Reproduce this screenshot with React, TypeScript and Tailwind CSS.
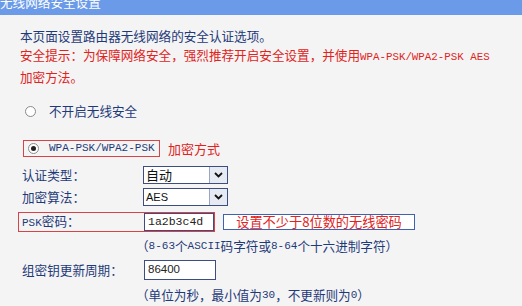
const cjk = "font-['Noto_Sans_CJK_SC',sans-serif]";
const mono = "font-['Liberation_Mono',monospace]";

function Radio({ checked }: { checked?: boolean }) {
  return (
    <span className="flex h-[11px] w-[11px] items-center justify-center rounded-full border border-[#8a8a8a] bg-white">
      {checked && <span className="h-[5px] w-[5px] rounded-full bg-[#222]" />}
    </span>
  );
}

function Select({ value, latin }: { value: string; latin?: boolean }) {
  return (
    <div className="flex h-[18px] w-[85px] items-stretch border border-[#3d4d80] bg-white">
      <span
        className={
          latin
            ? "flex-1 pl-[2px] text-[11px] leading-[16px] text-[#111] font-['Liberation_Sans',sans-serif]"
            : "flex-1 pl-[2px] text-[13px] leading-[16px] text-[#111]"
        }
      >
        {value}
      </span>
      <span className="flex w-[18px] items-center justify-center border-l border-[#9aa6c4] bg-[#e6eaf2]">
        <svg width="9" height="6" viewBox="0 0 9 6">
          <path d="M1 1l3.5 3.5L8 1" fill="none" stroke="#111" strokeWidth="1.8" />
        </svg>
      </span>
    </div>
  );
}

export default function App() {
  return (
    <div className={`h-[306px] w-[522px] overflow-hidden bg-[#f4f4f4] text-[12.6px] text-[#1f3a78] ${cjk}`}>
      <div className="h-[15px] overflow-hidden bg-[#6a9ae8]">
        <div className="-mt-[7px] text-[12.6px] leading-[18px] text-white">无线网络安全设置</div>
      </div>

      <div className="pl-[20px] pt-[11px] leading-[19px]">
        <div>本页面设置路由器无线网络的安全认证选项。</div>
        <div className="text-[#e0231c]">
          安全提示：为保障网络安全，强烈推荐开启安全设置，并使用
          <span className={`${mono} text-[10.8px]`}>WPA-PSK/WPA2-PSK AES</span>
        </div>
        <div className="text-[#e0231c]">加密方法。</div>
      </div>

      <div className="mt-[15px] flex h-[20px] items-center pl-[25px]">
        <Radio />
        <span className="ml-[13px]">不开启无线安全</span>
      </div>

      <div className="mt-[19px] flex h-[17px] items-center pl-[23px]">
        <div className="flex h-[17px] w-[137px] items-center border border-[#d8434a] pl-[4px]">
          <Radio checked />
          <span className={`${mono} ml-[10px] text-[11px] text-[#1f3a78]`}>WPA-PSK/WPA2-PSK</span>
        </div>
        <span className="ml-[8px] text-[13px] text-[#e0231c]">加密方式</span>
      </div>

      <div className="mt-[9px] flex h-[18px] items-center pl-[22px]">
        <span className="w-[121px]">认证类型：</span>
        <Select value="自动" />
      </div>
      <div className="mt-[4px] flex h-[18px] items-center pl-[22px]">
        <span className="w-[121px]">加密算法：</span>
        <Select value="AES" latin />
      </div>

      <div className="mt-[6px] flex h-[20px] items-center pl-[18px]">
        <div className="flex h-[20px] w-[197px] items-center border border-[#d8434a]">
          <span className="w-[125px] pl-[3px]">
            <span className={`${mono} text-[11px]`}>PSK</span>密码：
          </span>
          <div className={`flex h-[18px] flex-1 items-center border border-[#3d4d80] bg-white pl-[3px] text-[11.5px] text-[#222] ${mono}`}>
            1a2b3c4d
          </div>
        </div>
        <div className="ml-[8px] flex h-[16px] w-[192px] items-center justify-center border border-[#4060b0] bg-white text-[13.2px] leading-[14px] text-[#e0231c]">
          设置不少于8位数的无线密码
        </div>
      </div>

      <div className="flex h-[28px] items-center pl-[136px]">
        （<span className={`${mono} text-[11px]`}>8-63</span>个<span className={`${mono} text-[11px]`}>ASCII</span>码字符或<span className={`${mono} text-[11px]`}>8-64</span>个十六进制字符）
      </div>

      <div className="flex h-[20px] items-center pl-[22px]">
        <span className="w-[122px]">组密钥更新周期：</span>
        <div className="flex h-[20px] w-[72px] items-center border border-[#3d4d80] bg-white pl-[3px] text-[11.5px] text-[#222] font-['Liberation_Sans',sans-serif]">
          86400
        </div>
      </div>

      <div className="mt-[5px] flex h-[20px] items-center pl-[136px]">
        （单位为秒，最小值为<span className={`${mono} text-[11px]`}>30</span>，不更新则为<span className={`${mono} text-[11px]`}>0</span>）
      </div>
    </div>
  );
}
